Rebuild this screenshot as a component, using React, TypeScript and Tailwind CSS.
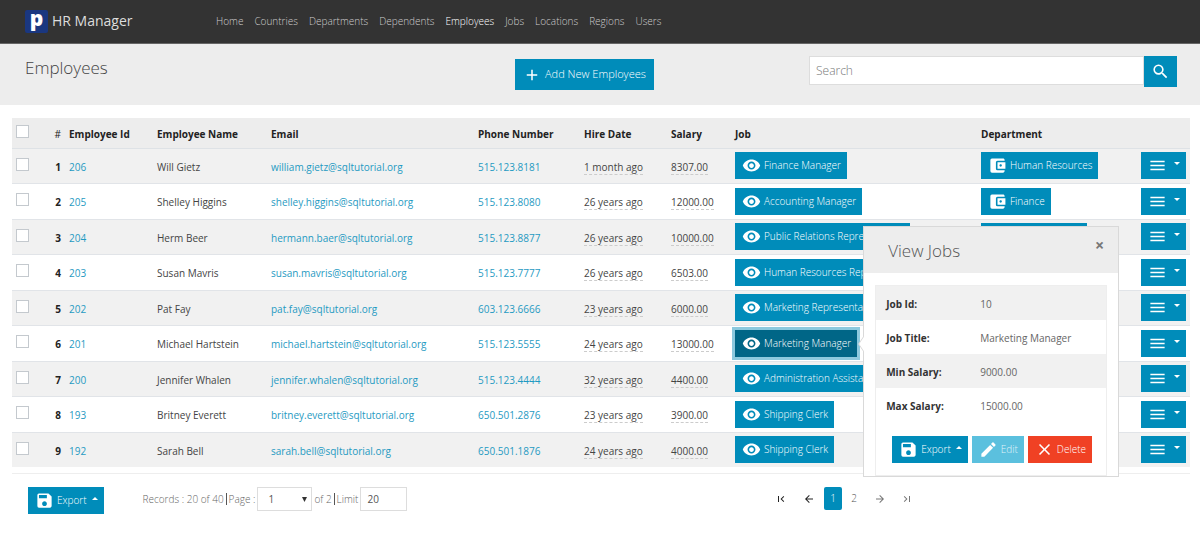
import React from "react";
import {
  MdAccountBalanceWallet,
  MdAdd,
  MdArrowBack,
  MdArrowForward,
  MdClear,
  MdEdit,
  MdFirstPage,
  MdLastPage,
  MdMenu,
  MdRemoveRedEye,
  MdSave,
  MdSearch,
} from "react-icons/md";

type Employee = {
  id: number;
  name: string;
  email: string;
  phone: string;
  hired: string;
  salary: string;
  job: string;
  department?: string;
};

const employees: Employee[] = [
  { id: 206, name: "Will Gietz", email: "william.gietz@sqltutorial.org", phone: "515.123.8181", hired: "1 month ago", salary: "8307.00", job: "Finance Manager", department: "Human Resources" },
  { id: 205, name: "Shelley Higgins", email: "shelley.higgins@sqltutorial.org", phone: "515.123.8080", hired: "26 years ago", salary: "12000.00", job: "Accounting Manager", department: "Finance" },
  { id: 204, name: "Herm Beer", email: "hermann.baer@sqltutorial.org", phone: "515.123.8877", hired: "26 years ago", salary: "10000.00", job: "Public Relations Representative", department: "Public Relations" },
  { id: 203, name: "Susan Mavris", email: "susan.mavris@sqltutorial.org", phone: "515.123.7777", hired: "26 years ago", salary: "6503.00", job: "Human Resources Representative" },
  { id: 202, name: "Pat Fay", email: "pat.fay@sqltutorial.org", phone: "603.123.6666", hired: "23 years ago", salary: "6000.00", job: "Marketing Representative" },
  { id: 201, name: "Michael Hartstein", email: "michael.hartstein@sqltutorial.org", phone: "515.123.5555", hired: "24 years ago", salary: "13000.00", job: "Marketing Manager" },
  { id: 200, name: "Jennifer Whalen", email: "jennifer.whalen@sqltutorial.org", phone: "515.123.4444", hired: "32 years ago", salary: "4400.00", job: "Administration Assistant" },
  { id: 193, name: "Britney Everett", email: "britney.everett@sqltutorial.org", phone: "650.501.2876", hired: "23 years ago", salary: "3900.00", job: "Shipping Clerk" },
  { id: 192, name: "Sarah Bell", email: "sarah.bell@sqltutorial.org", phone: "650.501.1876", hired: "24 years ago", salary: "4000.00", job: "Shipping Clerk" },
];

const navItems = ["Home", "Countries", "Departments", "Dependents", "Employees", "Jobs", "Locations", "Regions", "Users"];

const jobDetails = [
  ["Job Id:", "10"],
  ["Job Title:", "Marketing Manager"],
  ["Min Salary:", "9000.00"],
  ["Max Salary:", "15000.00"],
];

const btn = "inline-flex h-[27px] items-center whitespace-nowrap pr-1.5 pl-[7px] text-[10px] font-light text-white";

function Caret({ up = false }: { up?: boolean }) {
  return (
    <svg viewBox="0 0 6 3" className="mb-1 h-[3px] w-[6px] shrink-0 fill-white" aria-hidden="true">
      <path d={up ? "M0 3L3 0L6 3Z" : "M0 0L3 3L6 0Z"} />
    </svg>
  );
}

function ExportButton() {
  return (
    <button type="button" className={`${btn} gap-[3px] bg-[#008cba]`}>
      <MdSave className="size-[19px]" />
      <span className="mr-0.5">Export</span>
      <Caret up />
    </button>
  );
}

function JobPopover() {
  return (
    <div role="dialog" aria-label="View Jobs" className="absolute -top-[104px] left-full z-10 ml-[6px] w-[256px] border border-[#d9d9d9] bg-white">
      <svg viewBox="0 0 6 16" className="absolute top-[109px] -left-[6px] h-[16px] w-[6px]" aria-hidden="true">
        <path d="M6 0L0.7 8L6 16" fill="#fff" stroke="#d9d9d9" />
      </svg>
      <div className="flex h-[46px] items-start justify-between bg-[#ededed] pr-3.5 pl-6">
        <h2 className="pt-3 text-[17px] leading-6 font-light text-[#555]">View Jobs</h2>
        <button type="button" aria-label="Close" className="pt-2.5 text-[16px] leading-4 font-bold text-[#777]">×</button>
      </div>
      <div className="mx-[11px] mt-[12px] border border-[#eee] pb-3">
        <table className="w-full text-left text-[10px]">
          <tbody>
            {jobDetails.map(([label, value]) => (
              <tr key={label} className="h-[34px] odd:bg-[#f1f1f1]">
                <th scope="row" className="w-[104px] pt-1 pl-2.5 font-bold text-[#333]">{label}</th>
                <td className="pt-1 text-[#666]">{value}</td>
              </tr>
            ))}
          </tbody>
        </table>
        <div className="mt-3.5 flex gap-1 pl-4">
          <ExportButton />
          <button type="button" className={`${btn} gap-[3px] bg-[#5bc0de]`}>
            <MdEdit className="size-[19px]" />
            <span className="opacity-80">Edit</span>
          </button>
          <button type="button" className={`${btn} gap-[3px] bg-[#f04124]`}>
            <MdClear className="size-[19px]" />
            Delete
          </button>
        </div>
      </div>
    </div>
  );
}

function Checkbox({ label }: { label: string }) {
  return <input type="checkbox" aria-label={label} className="mb-[3px] block size-[13px] appearance-none border border-[#c4c9ce] bg-white" />;
}

function EmployeeRow({ employee, index }: { employee: Employee; index: number }) {
  const open = employee.id === 201;
  return (
    <tr className="border-t border-[#e1e4e8] odd:bg-[#f1f1f1]">
      <td className="px-1"><Checkbox label={`Select ${employee.name}`} /></td>
      <th scope="row" className="px-1 pt-[3px] text-right font-bold text-[#222]">{index + 1}</th>
      <td className="px-1 pt-[3px]"><a href="#" className="text-[#1f9ac2]">{employee.id}</a></td>
      <td className="px-1 pt-[3px]">{employee.name}</td>
      <td className="px-1 pt-[3px]"><a href="#" className="text-[#1f9ac2]">{employee.email}</a></td>
      <td className="px-1 pt-[3px]"><a href="#" className="text-[#1f9ac2]">{employee.phone}</a></td>
      <td className="px-1 pt-[3px]"><span className="border-b border-dashed border-[#ccc]">{employee.hired}</span></td>
      <td className="px-1 pt-[3px]"><span className="border-b border-dashed border-[#ccc]">{employee.salary}</span></td>
      <td className="px-1 py-[3px]">
        <div className="relative flex w-max">
          <button
            type="button"
            className={`${btn} gap-[3px] ${open ? "bg-[#006687] ring-3 ring-[#8cc9de]" : "bg-[#008cba]"}`}
          >
            <MdRemoveRedEye className="size-[19px]" />
            {employee.job}
          </button>
          {open && <JobPopover />}
        </div>
      </td>
      <td className="px-1 py-[3px]">
        {employee.department && (
          <button type="button" className={`${btn} gap-[3px] bg-[#008cba] align-middle`}>
            <MdAccountBalanceWallet className="size-[19px]" />
            {employee.department}
          </button>
        )}
      </td>
      <td className="px-1 py-[3px]">
        <button type="button" aria-label={`Actions for ${employee.name}`} className={`${btn} gap-[7px] bg-[#008cba] align-middle`}>
          <MdMenu className="size-[19px]" />
          <Caret />
        </button>
      </td>
    </tr>
  );
}

export default function App() {
  return (
    <div className="bg-white font-['Open_Sans','Noto_Sans',sans-serif] text-[10px] text-[#444]">
      <header className="flex h-11 items-center border-b border-[#666] bg-[#333] pl-[25px]">
        <a href="#" className="flex w-[191px] items-center gap-1 text-[14px] text-[#ddd]">
          <span aria-hidden="true" className="flex size-[23px] items-center justify-center rounded-xs bg-[#1a3780] pb-1.5 text-[21px] font-extrabold text-white">p</span>
          <span className="pb-0.5">HR Manager</span>
        </a>
        <nav className="flex gap-[11px] font-light">
          {navItems.map((item) => (
            <a key={item} href="#" className={item === "Employees" ? "text-white" : "text-[#ccc]"}>{item}</a>
          ))}
        </nav>
      </header>

      <section className="grid h-[61px] grid-cols-[490fr_294fr_368fr] items-start bg-[#ededed] pr-[23px] pl-[25px]">
        <h1 className="pt-3 text-[17px] leading-6 font-light text-[#444]">Employees</h1>
        <div className="pt-[15px]">
          <button type="button" className="flex h-[31px] items-center gap-1 bg-[#008cba] px-2 text-[11px] font-light whitespace-nowrap text-white">
            <MdAdd className="size-[18px]" />
            Add New Employees
          </button>
        </div>
        <form className="flex items-start pt-3" onSubmit={(e) => e.preventDefault()}>
          <input type="search" aria-label="Search" placeholder="Search" className="h-[29px] min-w-0 flex-1 border border-[#ddd] bg-white px-1.5 text-[12px] font-light outline-none placeholder:text-[#777]" />
          <button type="submit" aria-label="Submit search" className="flex h-[31px] w-[33px] items-center justify-center bg-[#008cba] text-white">
            <MdSearch className="size-[19px]" />
          </button>
        </form>
      </section>

      <main className="pt-[13px] pr-2.5 pl-3">
        <table className="h-[349px] w-full table-fixed border-collapse text-left">
          <colgroup>
            <col className="w-[37px]" />
            <col className="w-[16px]" />
            <col className="w-[88px]" />
            <col className="w-[114px]" />
            <col className="w-[207px]" />
            <col className="w-[106px]" />
            <col className="w-[87px]" />
            <col className="w-[64px]" />
            <col />
            <col className="w-[160px]" />
            <col className="w-[53px]" />
          </colgroup>
          <thead>
            <tr className="h-[30px] border-b border-[#dee2e6] bg-[#ededed] text-[#222]">
              <th className="px-1"><Checkbox label="Select all" /></th>
              <th className="px-1 pt-[3px] text-right font-normal">#</th>
              <th className="px-1 pt-[3px]">Employee Id</th>
              <th className="px-1 pt-[3px]">Employee Name</th>
              <th className="px-1 pt-[3px]">Email</th>
              <th className="px-1 pt-[3px]">Phone Number</th>
              <th className="px-1 pt-[3px]">Hire Date</th>
              <th className="px-1 pt-[3px]">Salary</th>
              <th className="px-1 pt-[3px]">Job</th>
              <th className="px-1 pt-[3px]">Department</th>
              <th className="px-1 pt-[3px]" aria-label="Actions" />
            </tr>
          </thead>
          <tbody>
            {employees.map((employee, index) => (
              <EmployeeRow key={employee.id} employee={employee} index={index} />
            ))}
          </tbody>
        </table>

        <footer className="mt-1.5 grid grid-cols-[757fr_421fr] items-start border-t border-[#eee] pt-[13px]">
          <div className="flex items-start pl-4">
            <ExportButton />
            <div className="ml-[39px] flex items-center gap-0.5 font-light text-[#666]">
              <span>Records : 20 of 40</span>
              <span className="h-3 w-px bg-[#555]" />
              <label htmlFor="page">Page :</label>
              <span className="relative flex items-center">
                <select id="page" defaultValue="1" className="h-6 w-[55px] appearance-none border border-[#ddd] bg-white px-2.5 font-normal text-[#555]">
                  <option>1</option>
                  <option>2</option>
                </select>
                <svg viewBox="0 0 5 5" className="pointer-events-none absolute right-[5px] size-[5px] fill-[#333]" aria-hidden="true">
                  <path d="M0 0H5L2.5 5Z" />
                </svg>
              </span>
              <span>of 2</span>
              <span className="h-3 w-px bg-[#555]" />
              <label htmlFor="limit">Limit</label>
              <input id="limit" defaultValue="20" className="h-6 w-[47px] border border-[#ddd] bg-white px-1.5 font-normal text-[#555]" />
            </div>
          </div>
          <nav aria-label="Pagination" className="flex items-center font-light text-[#555]">
            <a href="#" aria-label="First page" className="flex w-6 justify-center text-[#222]"><MdFirstPage className="size-3" /></a>
            <a href="#" aria-label="Previous page" className="flex w-[31px] justify-center text-[#222]"><MdArrowBack className="size-3" /></a>
            <a href="#" aria-current="page" className="flex h-[23px] w-[18px] items-center justify-center rounded-xs bg-[#008cba] text-white">1</a>
            <a href="#" className="flex w-6 justify-center">2</a>
            <a href="#" aria-label="Next page" className="flex w-[27px] justify-center text-[#777]"><MdArrowForward className="size-3" /></a>
            <a href="#" aria-label="Last page" className="ml-0.5 flex w-6 justify-center text-[#777]"><MdLastPage className="size-3" /></a>
          </nav>
        </footer>
      </main>
    </div>
  );
}
